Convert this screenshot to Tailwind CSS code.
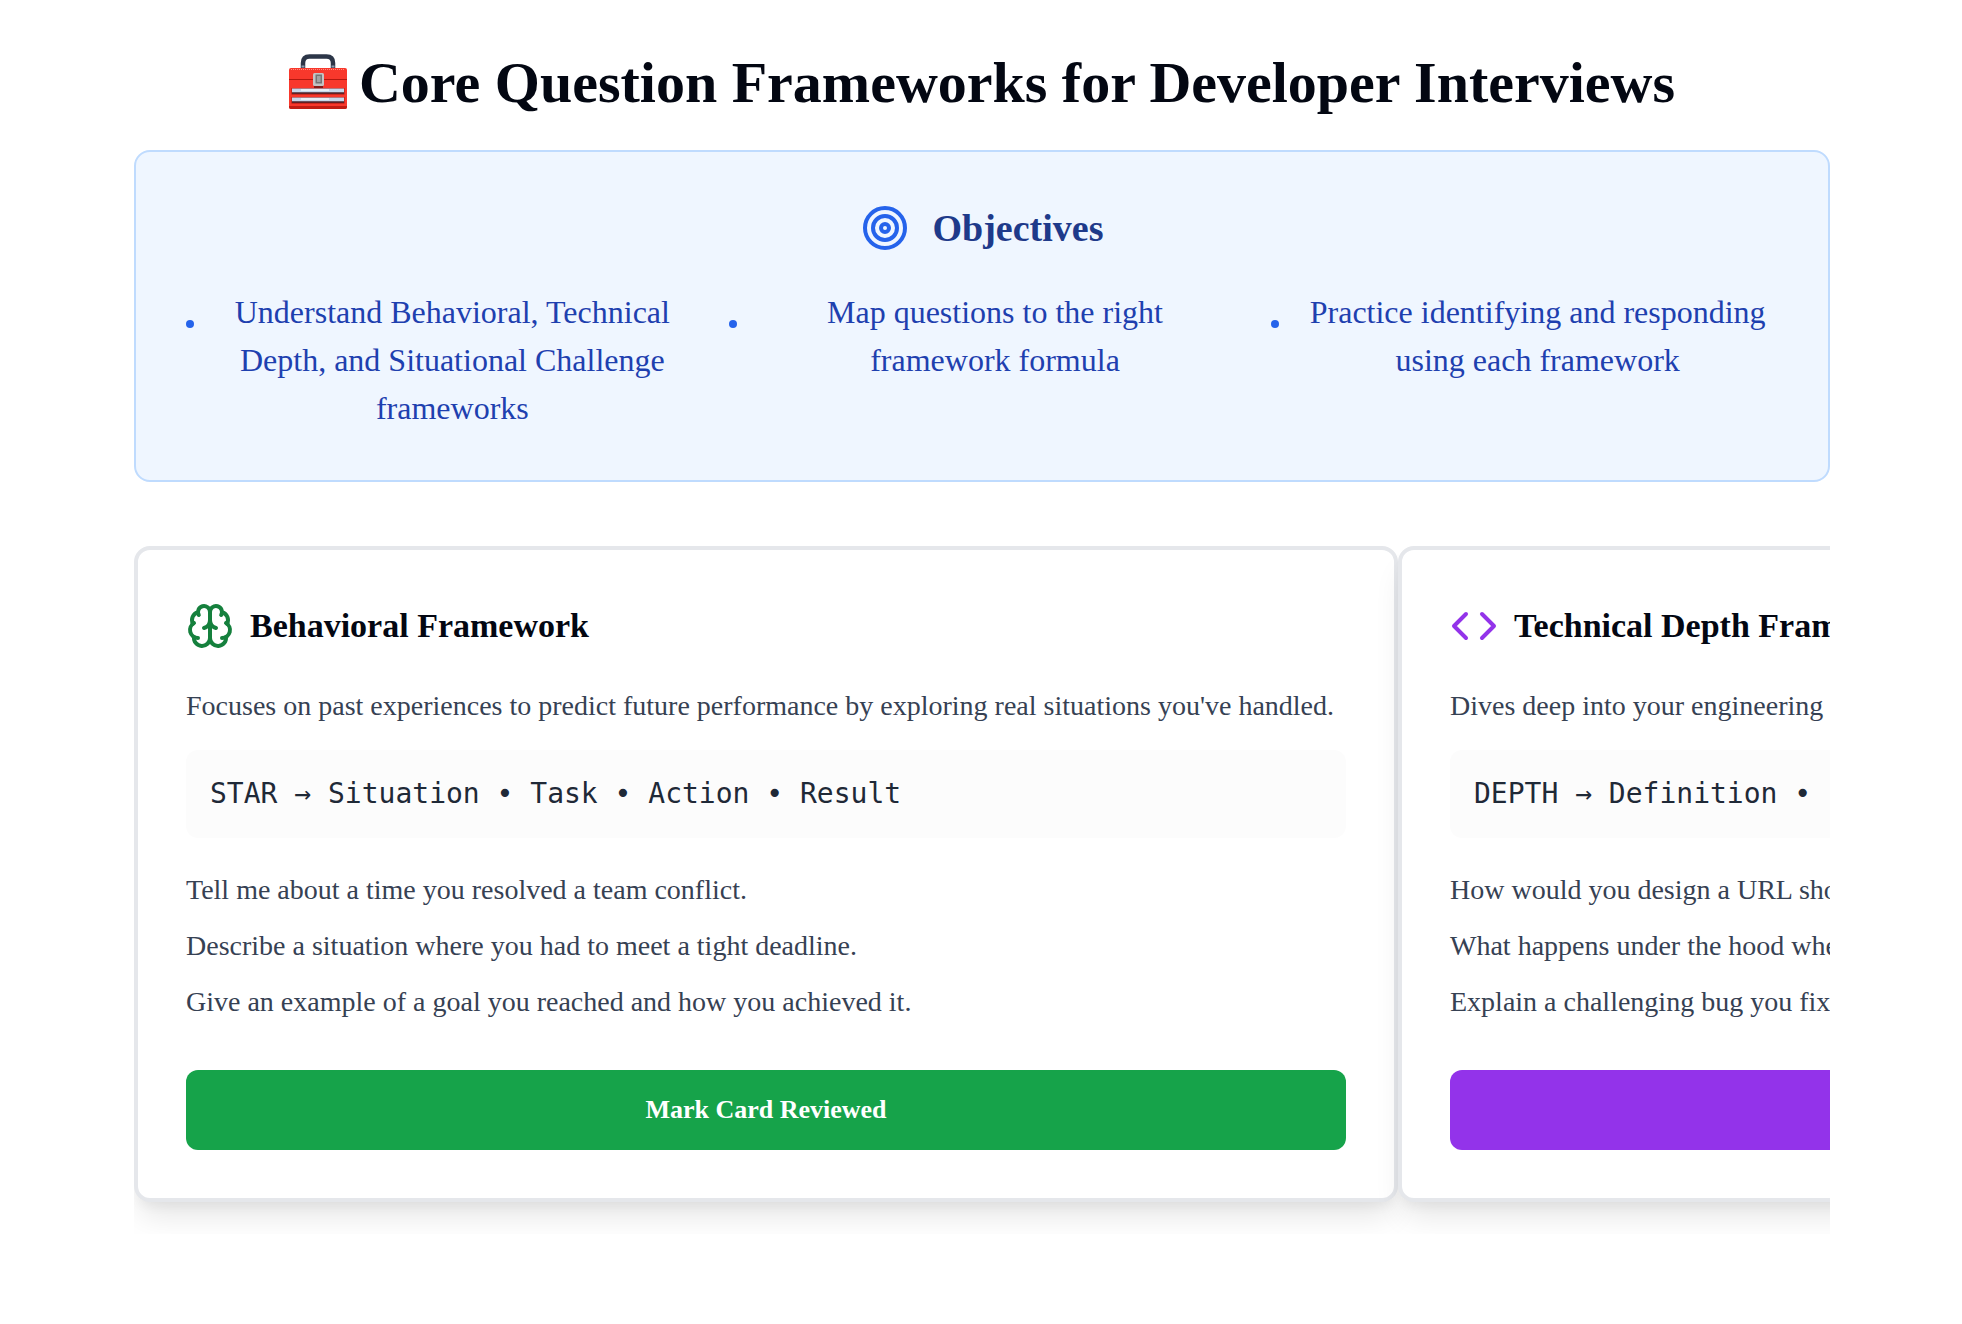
<!DOCTYPE html>
<html lang="en">
<head>
  <meta charset="UTF-8" />
  <meta name="viewport" content="width=device-width, initial-scale=1.0" />
  <title>Core Question Frameworks for Developer Interviews</title>
  <script src="https://cdn.jsdelivr.net/npm/@tailwindcss/browser@4"></script>
</head>
<body class="bg-white text-gray-700 font-['Liberation_Serif',serif] min-h-screen pl-0.5">
  <main class="max-w-[1696px] mx-auto pt-12 pb-12">
    <h1 class="flex items-center justify-center gap-3 mb-8 text-[58px] leading-[70px] font-bold text-[#030712]">
      <svg class="w-[58px] h-[58px] shrink-0" viewBox="0 0 58 58" role="img" aria-label="Toolbox">
        <path d="M14 15V9Q14 2.500 20.500 2.500H37.500Q44 2.500 44 9V15" fill="none" stroke="#2c3648" stroke-width="4.500" />
        <path d="M12.500 12.500h3M42.500 12.500h3" stroke="#8d9bb0" stroke-width="2" />
        <rect x="0" y="14" width="58" height="41" rx="2" fill="#f8382c" />
        <path d="M2 15.500H56" stroke="#ff8f83" stroke-width="1" stroke-dasharray="1 1" />
        <path d="M0 25.500H58" stroke="#b3180f" stroke-width="1" />
        <path d="M0 52h58v1q0 2-2 2H2q-2 0-2-2z" fill="#c01d14" />
        <rect x="2.500" y="34" width="53" height="6.500" fill="#a31610" />
        <rect x="3" y="34.500" width="52" height="4" fill="#c6d8ec" />
        <path d="M12 36H40" stroke="#f3f8fd" stroke-width="1.500" />
        <path d="M3 39H55" stroke="#222b3b" stroke-width="1.200" />
        <rect x="2.500" y="43" width="53" height="6.500" fill="#a31610" />
        <rect x="3" y="43.500" width="52" height="4" fill="#c6d8ec" />
        <path d="M12 45H40" stroke="#f3f8fd" stroke-width="1.500" />
        <path d="M3 48H55" stroke="#222b3b" stroke-width="1.200" />
        <rect x="24" y="19" width="11" height="13" rx="1.500" fill="#c4c4c4" />
        <rect x="26.500" y="20.500" width="6.500" height="9" fill="#757575" />
        <rect x="28" y="22" width="3.500" height="6" fill="#a3a3a3" />
        <path d="M25 33H34" stroke="#5e1512" stroke-width="1.500" />
      </svg>
      Core Question Frameworks for Developer Interviews
    </h1>

    <!-- Objectives -->
    <section class="p-12 mb-16 bg-[#eff6ff] border-2 border-[#bfdbfe] rounded-2xl text-[#1e40af]">
      <h2 class="flex items-center justify-center gap-6 mb-8 text-[38px] leading-[56px] font-bold text-[#1e3a8a]">
        <svg class="w-12 h-12 text-[#2563eb]" viewBox="0 0 24 24" fill="none" stroke="currentColor" stroke-width="2" aria-hidden="true">
          <circle cx="12" cy="12" r="10" />
          <circle cx="12" cy="12" r="6" />
          <circle cx="12" cy="12" r="2" />
        </svg>
        Objectives
      </h2>
      <ul class="grid grid-cols-3 gap-8 text-[32px] leading-[48px] text-center">
        <li class="flex items-start gap-4">
          <span class="w-2 h-2 ml-0.5 mt-8 shrink-0 rounded-full bg-[#2563eb]"></span>
          <span class="flex-1">Understand Behavioral, Technical Depth, and Situational Challenge frameworks</span>
        </li>
        <li class="flex items-start gap-4">
          <span class="w-2 h-2 ml-0.5 mt-8 shrink-0 rounded-full bg-[#2563eb]"></span>
          <span class="flex-1">Map questions to the right<br />framework formula</span>
        </li>
        <li class="flex items-start gap-4">
          <span class="w-2 h-2 ml-0.5 mt-8 shrink-0 rounded-full bg-[#2563eb]"></span>
          <span class="flex-1">Practice identifying and responding using each framework</span>
        </li>
      </ul>
    </section>

    <!-- Framework cards -->
    <div class="flex overflow-x-auto pb-8 [scrollbar-width:none] whitespace-nowrap text-[28px] leading-[40px]">
      <article class="w-[1264px] shrink-0 p-12 bg-white border-4 border-[#e5e7eb] rounded-2xl shadow-[0_20px_30px_-6px_rgba(0,0,0,0.1),0_8px_12px_-4px_rgba(0,0,0,0.05)]">
        <h3 class="flex items-center gap-4 mb-8 text-[34px] leading-[56px] font-bold text-[#030712]">
          <svg class="w-12 h-12 text-[#15803d]" viewBox="0 0 24 24" fill="none" stroke="currentColor" stroke-width="2" stroke-linecap="round" stroke-linejoin="round" aria-hidden="true">
            <path d="M12 18V5" />
            <path d="M15 13a4.17 4.17 0 0 1-3-4 4.17 4.17 0 0 1-3 4" />
            <path d="M17.598 6.5A3 3 0 1 0 12 5a3 3 0 1 0-5.598 1.5" />
            <path d="M17.997 5.125a4 4 0 0 1 2.526 5.77" />
            <path d="M18 18a4 4 0 0 0 2-7.464" />
            <path d="M19.967 17.483A4 4 0 1 1 12 18a4 4 0 1 1-7.967-.517" />
            <path d="M6 18a4 4 0 0 1-2-7.464" />
            <path d="M6.003 5.125a4 4 0 0 0-2.526 5.77" />
          </svg>
          Behavioral Framework
        </h3>
        <p class="mb-6">Focuses on past experiences to predict future performance by exploring real situations you've handled.</p>
        <div class="p-6 mb-8 rounded-xl bg-[#fcfcfc] text-[#1f2937] font-['DejaVu_Sans_Mono',monospace]">STAR → Situation • Task • Action • Result</div>
        <ul class="flex flex-col gap-4 mb-12">
          <li>Tell me about a time you resolved a team conflict.</li>
          <li>Describe a situation where you had to meet a tight deadline.</li>
          <li>Give an example of a goal you reached and how you achieved it.</li>
        </ul>
        <button type="button" class="block w-full h-20 rounded-xl bg-[#16a34a] text-white text-[26px] font-bold">Mark Card Reviewed</button>
      </article>

      <article class="w-[1264px] shrink-0 p-12 bg-white border-4 border-[#e5e7eb] rounded-2xl shadow-[0_20px_30px_-6px_rgba(0,0,0,0.1),0_8px_12px_-4px_rgba(0,0,0,0.05)]">
        <h3 class="flex items-center gap-4 mb-8 text-[34px] leading-[56px] font-bold text-[#030712]">
          <svg class="w-12 h-12 text-[#9333ea]" viewBox="0 0 24 24" fill="none" stroke="currentColor" stroke-width="2" stroke-linecap="round" stroke-linejoin="round" aria-hidden="true">
            <path d="m16 18 6-6-6-6" />
            <path d="m8 6-6 6 6 6" />
          </svg>
          Technical Depth Framework
        </h3>
        <p class="mb-6">Dives deep into your engineering knowledge and problem solving.</p>
        <div class="p-6 mb-8 rounded-xl bg-[#fcfcfc] text-[#1f2937] font-['DejaVu_Sans_Mono',monospace]">DEPTH → Definition • Example</div>
        <ul class="flex flex-col gap-4 mb-12">
          <li>How would you design a URL shortener?</li>
          <li>What happens under the hood when you load a page?</li>
          <li>Explain a challenging bug you fixed.</li>
        </ul>
        <button type="button" class="block w-full h-20 rounded-xl bg-[#9333ea] text-white text-[26px] font-bold">Mark Card Reviewed</button>
      </article>
    </div>
  </main>
</body>
</html>
